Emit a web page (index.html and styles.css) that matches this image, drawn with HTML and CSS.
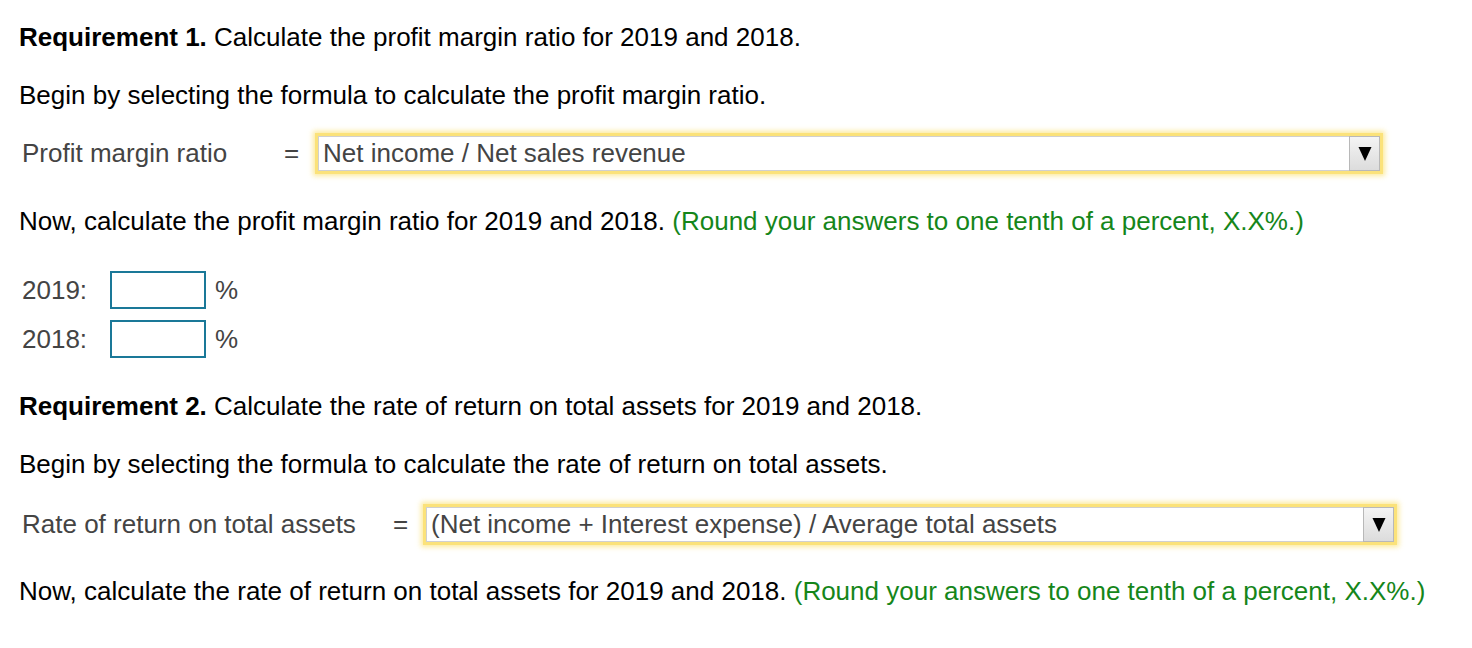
FILE: index.html
```html
<!DOCTYPE html>
<html>
<head>
<meta charset="utf-8">
<link rel="stylesheet" href="styles.css">
</head>
<body>
<div class="page">
  <p class="line r1"><b>Requirement 1.</b> Calculate the profit margin ratio for 2019 and 2018.</p>
  <p class="line b1">Begin by selecting the formula to calculate the profit margin ratio.</p>
  <div class="formula f1">
    <span class="flabel">Profit margin ratio</span>
    <span class="eq">=</span>
    <div class="select s1"><span class="sel-text">Net income / Net sales revenue</span><span class="sel-btn"><svg width="14" height="16" viewBox="0 0 14 16"><path d="M0.5 1 H13.5 L7 15 Z" fill="#000"/></svg></span></div>
  </div>
  <p class="line n1">Now, calculate the profit margin ratio for 2019 and 2018. <span class="green">(Round your answers to one tenth of a percent, X.X%.)</span></p>
  <div class="answers">
    <div class="arow"><span class="alabel">2019:</span><span class="abox"></span><span class="pct">%</span></div>
    <div class="arow"><span class="alabel">2018:</span><span class="abox"></span><span class="pct">%</span></div>
  </div>
  <p class="line r2"><b>Requirement 2.</b> Calculate the rate of return on total assets for 2019 and 2018.</p>
  <p class="line b2">Begin by selecting the formula to calculate the rate of return on total assets.</p>
  <div class="formula f2">
    <span class="flabel">Rate of return on total assets</span>
    <span class="eq">=</span>
    <div class="select s2"><span class="sel-text">(Net income + Interest expense) / Average total assets</span><span class="sel-btn"><svg width="14" height="16" viewBox="0 0 14 16"><path d="M0.5 1 H13.5 L7 15 Z" fill="#000"/></svg></span></div>
  </div>
  <p class="line n2">Now, calculate the rate of return on total assets for 2019 and 2018. <span class="green">(Round your answers to one tenth of a percent, X.X%.)</span></p>
</div>
</body>
</html>
```
FILE: styles.css
```css
html, body {
  margin: 0;
  padding: 0;
  background: #fff;
}
.page {
  font-family: "Liberation Sans", Arial, sans-serif;
  font-size: 26px;
  color: #000;
  padding: 22px 0 0 19px;
  display: flex;
  flex-direction: column;
  align-items: flex-start;
}
.line {
  margin: 0;
  line-height: 30px;
  height: 30px;
  white-space: nowrap;
}
.b1 { margin-top: 28px; }
.f1 { margin-top: 23px; }
.n1 { margin-top: 32px; }
.answers { margin-top: 35px; }
.r2 { margin-top: 33px; }
.b2 { margin-top: 28px; }
.f2 { margin-top: 25px; }
.n2 { margin-top: 31px; }

.formula {
  display: flex;
  align-items: center;
  color: #444;
  margin-left: 3px;
}
.f1 .flabel { width: 262px; }
.f2 .flabel { width: 371px; }
.eq { width: 31px; }
.f2 .eq { width: 30px; }
.select {
  display: flex;
  align-items: stretch;
  height: 35px;
  border: 3px solid #fbe27a;
  box-shadow: 0 0 5px 2px rgba(250, 220, 90, 0.6);
  background: #fff;
}
.s1 { width: 1062px; }
.s2 { width: 968px; }
.sel-text {
  flex: 1;
  padding-left: 4px;
  line-height: 33px;
  color: #444;
  border: 1px solid #d0d0d0;
  border-right: none;
}
.sel-btn {
  width: 29px;
  display: flex;
  align-items: center;
  justify-content: center;
  background: linear-gradient(#f4f4f4, #dcdcdc);
  border: 1px solid #b8b8b8;
}
.green { color: #15861a; }
.answers {
  margin-left: 3px;
  color: #444;
  display: flex;
  flex-direction: column;
  gap: 11px;
}
.arow {
  display: flex;
  align-items: center;
  height: 38px;
}
.alabel { width: 88px; }
.abox {
  width: 92px;
  height: 34px;
  border: 2px solid #1a7898;
  margin-right: 9px;
}
```
